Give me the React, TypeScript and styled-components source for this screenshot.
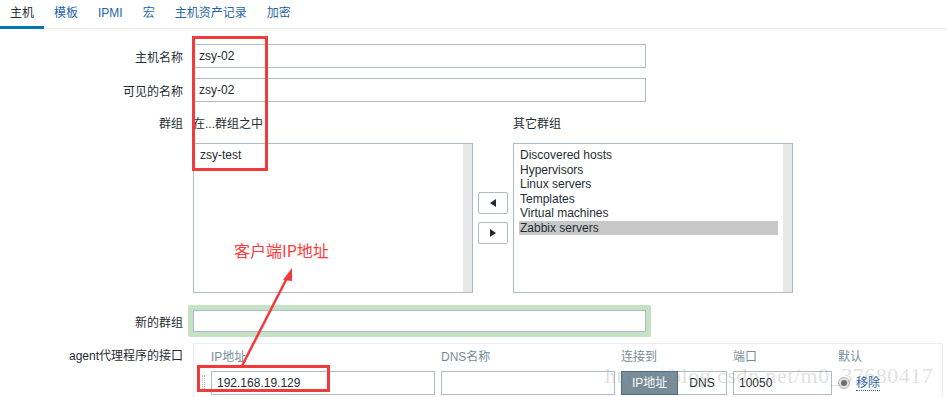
import React from 'react';
import styled, { createGlobalStyle } from 'styled-components';

const GlobalStyle = createGlobalStyle`
  html, body {
    margin: 0;
    padding: 0;
    background: #fff;
  }
  body {
    font-family: "Liberation Sans", Arial, "Noto Sans CJK SC", sans-serif;
    font-size: 12px;
    color: #1f2c33;
  }
`;

const Page = styled.div`
  position: relative;
  width: 947px;
  height: 397px;
  overflow: hidden;
`;

const TabBar = styled.ul`
  display: flex;
  margin: 0;
  padding: 0;
  list-style: none;
  height: 28px;
  border-bottom: 1px solid #ebeef0;
`;

const Tab = styled.li<{ $active?: boolean }>`
  padding: 0 10px;
  height: 26px;
  line-height: 26px;
  color: ${(p) => (p.$active ? '#1f2c33' : '#1f65a6')};
  border-bottom: 3px solid ${(p) => (p.$active ? '#0275b8' : 'transparent')};
`;

const Form = styled.div`
  padding-top: 15px;
`;

const Row = styled.div<{ $top?: number }>`
  display: grid;
  grid-template-columns: 183px 1fr;
  column-gap: 10px;
  margin-top: ${(p) => p.$top ?? 0}px;
  align-items: center;
`;

const Label = styled.div<{ $alignTop?: boolean; $lh?: number }>`
  text-align: right;
  white-space: nowrap;
  align-self: ${(p) => (p.$alignTop ? 'start' : 'center')};
  line-height: ${(p) => (p.$alignTop ? `${p.$lh ?? 24}px` : 'normal')};
`;

const TextInput = styled.div<{ $width?: number; $height?: number }>`
  box-sizing: border-box;
  width: ${(p) => p.$width ?? 453}px;
  height: ${(p) => p.$height ?? 24}px;
  border: 1px solid #acbbc7;
  padding: 0 5px;
  line-height: ${(p) => (p.$height ?? 24) - 2}px;
  background: #fff;
  color: #1f2c33;
`;

const GroupsGrid = styled.div`
  display: grid;
  grid-template-columns: 280px 30px 280px;
  column-gap: 5px;
`;

const GroupHead = styled.div`
  height: 24px;
  line-height: 24px;
  margin-bottom: 7px;
`;

const ListBox = styled.div`
  box-sizing: border-box;
  height: 150px;
  border: 1px solid #acbbc7;
  display: flex;
  background: #fff;
`;

const ListItems = styled.div`
  flex: 1;
  padding: 4px 5px 0 5px;
`;

const ListItem = styled.div<{ $selected?: boolean }>`
  height: 14.5px;
  line-height: 14.5px;
  padding-left: 1px;
  background: ${(p) => (p.$selected ? '#c8c8c8' : 'transparent')};
`;

const ScrollTrack = styled.div`
  width: 9px;
  background: #e8e8e8;
`;

const MoveButtons = styled.div`
  display: flex;
  flex-direction: column;
  gap: 8px;
  align-self: start;
  margin-top: 49px;
`;

const MoveButton = styled.div`
  box-sizing: border-box;
  width: 30px;
  height: 22px;
  border: 1px solid #acbbc7;
  border-radius: 2px;
  display: flex;
  align-items: center;
  justify-content: center;
  background: #fff;
`;

const NewGroupWrap = styled.div`
  box-sizing: border-box;
  width: 463px;
  margin-left: -5px;
  padding: 5px;
  background: #c5e2c5;
  border-radius: 2px;
`;

const AgentBox = styled.div`
  box-sizing: border-box;
  height: 60px;
  border: 1px solid #ebeef0;
  padding-top: 6px;
  width: 750px;
`;

const AgentGrid = styled.div`
  display: grid;
  grid-template-columns: 17px 230px 180px 112px 105px 1fr;
  row-gap: 7px;
  align-items: center;
`;

const ColHead = styled.div`
  color: #768d99;
  line-height: 14px;
`;

const Handle = styled.div`
  justify-self: center;
  margin-left: 1px;
  width: 3px;
  height: 16px;
  border-left: 1px dotted #acbbc7;
  border-right: 1px dotted #acbbc7;
  box-sizing: border-box;
`;

const Segmented = styled.div`
  display: flex;
`;

const SegButton = styled.div<{ $on?: boolean }>`
  box-sizing: border-box;
  height: 24px;
  line-height: 22px;
  padding: 0 ${(p) => (p.$on ? 10 : 11)}px;
  border: 1px solid ${(p) => (p.$on ? '#4e6c7e' : '#acbbc7')};
  background: ${(p) => (p.$on ? '#768d99' : '#fff')};
  color: ${(p) => (p.$on ? '#fff' : '#1f2c33')};
  ${(p) => (!p.$on ? 'border-left: none;' : '')}
`;

const DefaultCell = styled.div`
  display: flex;
  align-items: center;
  gap: 6px;
`;

const Radio = styled.span`
  box-sizing: border-box;
  width: 12px;
  height: 12px;
  border-radius: 50%;
  border: 1px solid #b5b5b5;
  background: #e3e3e3;
  display: inline-flex;
  align-items: center;
  justify-content: center;
  &::after {
    content: '';
    width: 6px;
    height: 6px;
    border-radius: 50%;
    background: #6b6b6b;
  }
`;

const RemoveLink = styled.span`
  color: #1f65a6;
  border-bottom: 1px dotted #1f65a6;
  line-height: 14px;
`;

const Overlay = styled.svg`
  position: absolute;
  left: 0;
  top: 0;
  pointer-events: none;
`;

const Note = styled.div`
  position: absolute;
  left: 234px;
  top: 240px;
  font-family: "Noto Sans CJK SC", "Liberation Serif", serif;
  font-size: 16px;
  line-height: 20px;
  color: #ff3a3a;
`;

const Watermark = styled.div`
  position: absolute;
  left: 605px;
  top: 363px;
  font-family: "Liberation Serif", serif;
  font-size: 22px;
  line-height: 26px;
  letter-spacing: 0.5px;
  color: rgba(150, 150, 150, 0.3);
  pointer-events: none;
  white-space: nowrap;
`;

const otherGroups = [
  'Discovered hosts',
  'Hypervisors',
  'Linux servers',
  'Templates',
  'Virtual machines',
  'Zabbix servers',
];

const tabs = ['主机', '模板', 'IPMI', '宏', '主机资产记录', '加密'];

export default function App() {
  return (
    <Page>
      <GlobalStyle />
      <TabBar>
        {tabs.map((t, i) => (
          <Tab key={t} $active={i === 0}>
            {t}
          </Tab>
        ))}
      </TabBar>

      <Form>
        <Row>
          <Label>主机名称</Label>
          <TextInput>zsy-02</TextInput>
        </Row>
        <Row $top={10}>
          <Label>可见的名称</Label>
          <TextInput>zsy-02</TextInput>
        </Row>
        <Row $top={10}>
          <Label $alignTop>群组</Label>
          <GroupsGrid>
            <GroupHead>在...群组之中</GroupHead>
            <div />
            <GroupHead>其它群组</GroupHead>
            <ListBox>
              <ListItems>
                <ListItem>zsy-test</ListItem>
              </ListItems>
              <ScrollTrack />
            </ListBox>
            <MoveButtons>
              <MoveButton>
                <svg width="6" height="8" viewBox="0 0 6 8">
                  <path d="M6 0 L0 4 L6 8 Z" fill="#1f2c33" />
                </svg>
              </MoveButton>
              <MoveButton>
                <svg width="6" height="8" viewBox="0 0 6 8">
                  <path d="M0 0 L6 4 L0 8 Z" fill="#1f2c33" />
                </svg>
              </MoveButton>
            </MoveButtons>
            <ListBox>
              <ListItems>
                {otherGroups.map((g) => (
                  <ListItem key={g} $selected={g === 'Zabbix servers'}>
                    {g}
                  </ListItem>
                ))}
              </ListItems>
              <ScrollTrack />
            </ListBox>
          </GroupsGrid>
        </Row>
        <Row $top={12}>
          <Label>新的群组</Label>
          <NewGroupWrap>
            <TextInput $height={22} />
          </NewGroupWrap>
        </Row>
        <Row $top={6}>
          <Label $alignTop $lh={26}>
            agent代理程序的接口
          </Label>
          <AgentBox>
            <AgentGrid>
              <div />
              <ColHead>IP地址</ColHead>
              <ColHead>DNS名称</ColHead>
              <ColHead>连接到</ColHead>
              <ColHead>端口</ColHead>
              <ColHead>默认</ColHead>

              <Handle />
              <TextInput $width={224}>192.168.19.129</TextInput>
              <TextInput $width={174} />
              <Segmented>
                <SegButton $on>IP地址</SegButton>
                <SegButton>DNS</SegButton>
              </Segmented>
              <TextInput $width={99}>10050</TextInput>
              <DefaultCell>
                <Radio />
                <RemoveLink>移除</RemoveLink>
              </DefaultCell>
            </AgentGrid>
          </AgentBox>
        </Row>
      </Form>

      <Watermark>https://blog.csdn.net/m0_37680417</Watermark>

      <Overlay width="947" height="397" viewBox="0 0 947 397">
        <rect x="193.5" y="37.5" width="73" height="132" fill="none" stroke="#f23a3a" strokeWidth="3" />
        <rect x="198.5" y="366.5" width="130" height="24" fill="none" stroke="#f23a3a" strokeWidth="3" />
        <line x1="242" y1="366" x2="288" y2="276" stroke="#f23a3a" strokeWidth="2.5" />
        <path d="M292 268 L283 280 L292 281 Z" fill="#f23a3a" />
      </Overlay>
      <Note>客户端IP地址</Note>
    </Page>
  );
}
